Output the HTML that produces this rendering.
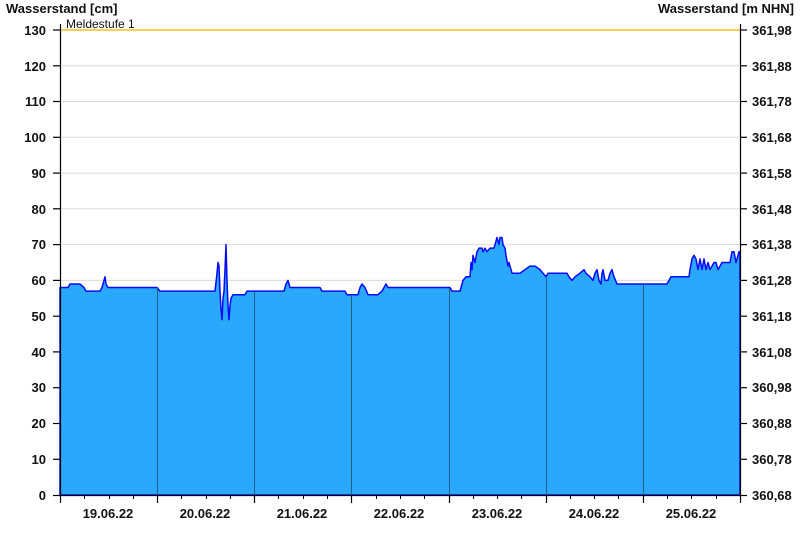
<!DOCTYPE html>
<html><head><meta charset="utf-8"><style>
html,body{margin:0;padding:0;background:#fff;width:800px;height:550px;overflow:hidden}
text{font-family:"Liberation Sans",Arial,sans-serif}
.l{font-size:13px;font-weight:bold;fill:#111}
</style></head><body>
<svg width="800" height="550" viewBox="0 0 800 550" xmlns="http://www.w3.org/2000/svg">
<rect width="800" height="550" fill="#fff"/>
<g stroke="#dcdcdc" stroke-width="1">
<line x1="60" x2="740" y1="459.3" y2="459.3"/><line x1="60" x2="740" y1="423.5" y2="423.5"/>
<line x1="60" x2="740" y1="387.7" y2="387.7"/><line x1="60" x2="740" y1="351.9" y2="351.9"/>
<line x1="60" x2="740" y1="316.2" y2="316.2"/><line x1="60" x2="740" y1="280.4" y2="280.4"/>
<line x1="60" x2="740" y1="244.6" y2="244.6"/><line x1="60" x2="740" y1="208.8" y2="208.8"/>
<line x1="60" x2="740" y1="173.1" y2="173.1"/><line x1="60" x2="740" y1="137.3" y2="137.3"/>
<line x1="60" x2="740" y1="101.5" y2="101.5"/><line x1="60" x2="740" y1="65.8" y2="65.8"/>
</g>
<line x1="60" x2="740" y1="30" y2="30" stroke="#f5c31c" stroke-width="1.5"/>
<text x="66" y="28" font-size="12" fill="#111">Meldestufe 1</text>
<g transform="translate(0,495) scale(1,-3.577)">
<polygon fill="#29a8fc" stroke="#0a0af5" stroke-width="1.5" vector-effect="non-scaling-stroke" stroke-linejoin="round" points="60,0 60,58 68,58 70,59 80,59 84,58 86,57 100,57 102,58 104,60 105,61 106,59 108,58 157,58 160,57 215,57 217,62 218,65 219,64 220,57 221,52 222,49 223,55 224,57 225,63 226,70 227,60 228,53 229,49 230,53 231,55 233,56 245,56 247,57 254,57 284,57 286,59 288,60 290,58 292,58 320,58 322,57 345,57 347,56 358,56 360,58 362,59 365,58 368,56 378,56 382,57 386,59 388,58 390,58 450,58 452,57 460,57 463,60 466,61 470,61 471,65 472,63 473,67 475,65 477,68 479,69 482,69 483,68 485,69 487,68 490,69 494,69 496,71 497,72 498,71 499,70 500,72 502,72 503,70 505,69 506,67 508,64 509,65 510,64 512,62 515,62 520,62 525,63 530,64 535,64 540,63 543,62 546,61 548,62 567,62 569,61 572,60 575,61 580,62 584,63 586,62 590,61 593,60 595,62 597,63 599,60 601,59 602,62 603,63 605,60 608,60 610,62 612,63 614,61 617,59 667,59 669,60 671,61 689,61 690,63 692,66 694,67 696,66 698,63 700,66 702,63 704,66 706,63 708,65 710,63 712,64 714,65 716,65 718,63 720,64 722,65 724,65 730,65 732,68 734,68 736,65 737,66 739,68 740,68 740,0"/>
</g>
<g stroke="#1f5f8a" stroke-width="1">
<line x1="157.5" x2="157.5" y1="288" y2="495"/><line x1="254.5" x2="254.5" y1="292" y2="495"/>
<line x1="351.5" x2="351.5" y1="295" y2="495"/><line x1="449.5" x2="449.5" y1="288" y2="495"/>
<line x1="546.5" x2="546.5" y1="278" y2="495"/><line x1="643.5" x2="643.5" y1="285" y2="495"/>
</g>
<g stroke="#000" stroke-width="1.2">
<line x1="60.5" x2="60.5" y1="24" y2="495"/><line x1="740.5" x2="740.5" y1="24" y2="495"/>
<line x1="60" x2="740" y1="495.5" y2="495.5"/>
<line x1="53" x2="60" y1="495.5" y2="495.5"/><line x1="53" x2="60" y1="459.3" y2="459.3"/><line x1="53" x2="60" y1="423.5" y2="423.5"/><line x1="53" x2="60" y1="387.7" y2="387.7"/><line x1="53" x2="60" y1="351.9" y2="351.9"/><line x1="53" x2="60" y1="316.2" y2="316.2"/><line x1="53" x2="60" y1="280.4" y2="280.4"/><line x1="53" x2="60" y1="244.6" y2="244.6"/><line x1="53" x2="60" y1="208.8" y2="208.8"/><line x1="53" x2="60" y1="173.1" y2="173.1"/><line x1="53" x2="60" y1="137.3" y2="137.3"/><line x1="53" x2="60" y1="101.5" y2="101.5"/><line x1="53" x2="60" y1="65.8" y2="65.8"/><line x1="53" x2="60" y1="30" y2="30"/>
<line x1="740" x2="747" y1="495.5" y2="495.5"/><line x1="740" x2="747" y1="459.3" y2="459.3"/><line x1="740" x2="747" y1="423.5" y2="423.5"/><line x1="740" x2="747" y1="387.7" y2="387.7"/><line x1="740" x2="747" y1="351.9" y2="351.9"/><line x1="740" x2="747" y1="316.2" y2="316.2"/><line x1="740" x2="747" y1="280.4" y2="280.4"/><line x1="740" x2="747" y1="244.6" y2="244.6"/><line x1="740" x2="747" y1="208.8" y2="208.8"/><line x1="740" x2="747" y1="173.1" y2="173.1"/><line x1="740" x2="747" y1="137.3" y2="137.3"/><line x1="740" x2="747" y1="101.5" y2="101.5"/><line x1="740" x2="747" y1="65.8" y2="65.8"/><line x1="740" x2="747" y1="30" y2="30"/>
<line x1="60.5" x2="60.5" y1="495" y2="503"/><line x1="157.5" x2="157.5" y1="495" y2="503"/><line x1="254.5" x2="254.5" y1="495" y2="503"/><line x1="351.5" x2="351.5" y1="495" y2="503"/><line x1="449.5" x2="449.5" y1="495" y2="503"/><line x1="546.5" x2="546.5" y1="495" y2="503"/><line x1="643.5" x2="643.5" y1="495" y2="503"/><line x1="740.5" x2="740.5" y1="495" y2="503"/>
</g>
<g stroke="#000" stroke-width="1">
<line x1="84.5" x2="84.5" y1="495" y2="499"/><line x1="109.5" x2="109.5" y1="495" y2="499"/><line x1="133.5" x2="133.5" y1="495" y2="499"/>
<line x1="181.5" x2="181.5" y1="495" y2="499"/><line x1="206.5" x2="206.5" y1="495" y2="499"/><line x1="230.5" x2="230.5" y1="495" y2="499"/>
<line x1="278.5" x2="278.5" y1="495" y2="499"/><line x1="303.5" x2="303.5" y1="495" y2="499"/><line x1="327.5" x2="327.5" y1="495" y2="499"/>
<line x1="376.5" x2="376.5" y1="495" y2="499"/><line x1="400.5" x2="400.5" y1="495" y2="499"/><line x1="424.5" x2="424.5" y1="495" y2="499"/>
<line x1="473.5" x2="473.5" y1="495" y2="499"/><line x1="497.5" x2="497.5" y1="495" y2="499"/><line x1="521.5" x2="521.5" y1="495" y2="499"/>
<line x1="570.5" x2="570.5" y1="495" y2="499"/><line x1="594.5" x2="594.5" y1="495" y2="499"/><line x1="618.5" x2="618.5" y1="495" y2="499"/>
<line x1="667.5" x2="667.5" y1="495" y2="499"/><line x1="691.5" x2="691.5" y1="495" y2="499"/><line x1="716.5" x2="716.5" y1="495" y2="499"/>
</g>
<text class="l" x="6" y="13">Wasserstand [cm]</text>
<text class="l" x="794" y="13" text-anchor="end">Wasserstand [m NHN]</text>
<g class="l" text-anchor="end">
<text x="46" y="500">0</text><text x="46" y="464">10</text><text x="46" y="428">20</text><text x="46" y="392">30</text><text x="46" y="357">40</text><text x="46" y="321">50</text><text x="46" y="285">60</text><text x="46" y="249">70</text><text x="46" y="214">80</text><text x="46" y="178">90</text><text x="46" y="142">100</text><text x="46" y="106">110</text><text x="46" y="71">120</text><text x="46" y="35">130</text>
</g>
<g class="l">
<text x="752" y="500">360,68</text><text x="752" y="464">360,78</text><text x="752" y="428">360,88</text><text x="752" y="392">360,98</text><text x="752" y="357">361,08</text><text x="752" y="321">361,18</text><text x="752" y="285">361,28</text><text x="752" y="249">361,38</text><text x="752" y="214">361,48</text><text x="752" y="178">361,58</text><text x="752" y="142">361,68</text><text x="752" y="106">361,78</text><text x="752" y="71">361,88</text><text x="752" y="35">361,98</text>
</g>
<g class="l" text-anchor="middle">
<text x="108" y="518">19.06.22</text><text x="205" y="518">20.06.22</text><text x="302" y="518">21.06.22</text><text x="399" y="518">22.06.22</text><text x="497" y="518">23.06.22</text><text x="594" y="518">24.06.22</text><text x="691" y="518">25.06.22</text>
</g>
</svg>
</body></html>
